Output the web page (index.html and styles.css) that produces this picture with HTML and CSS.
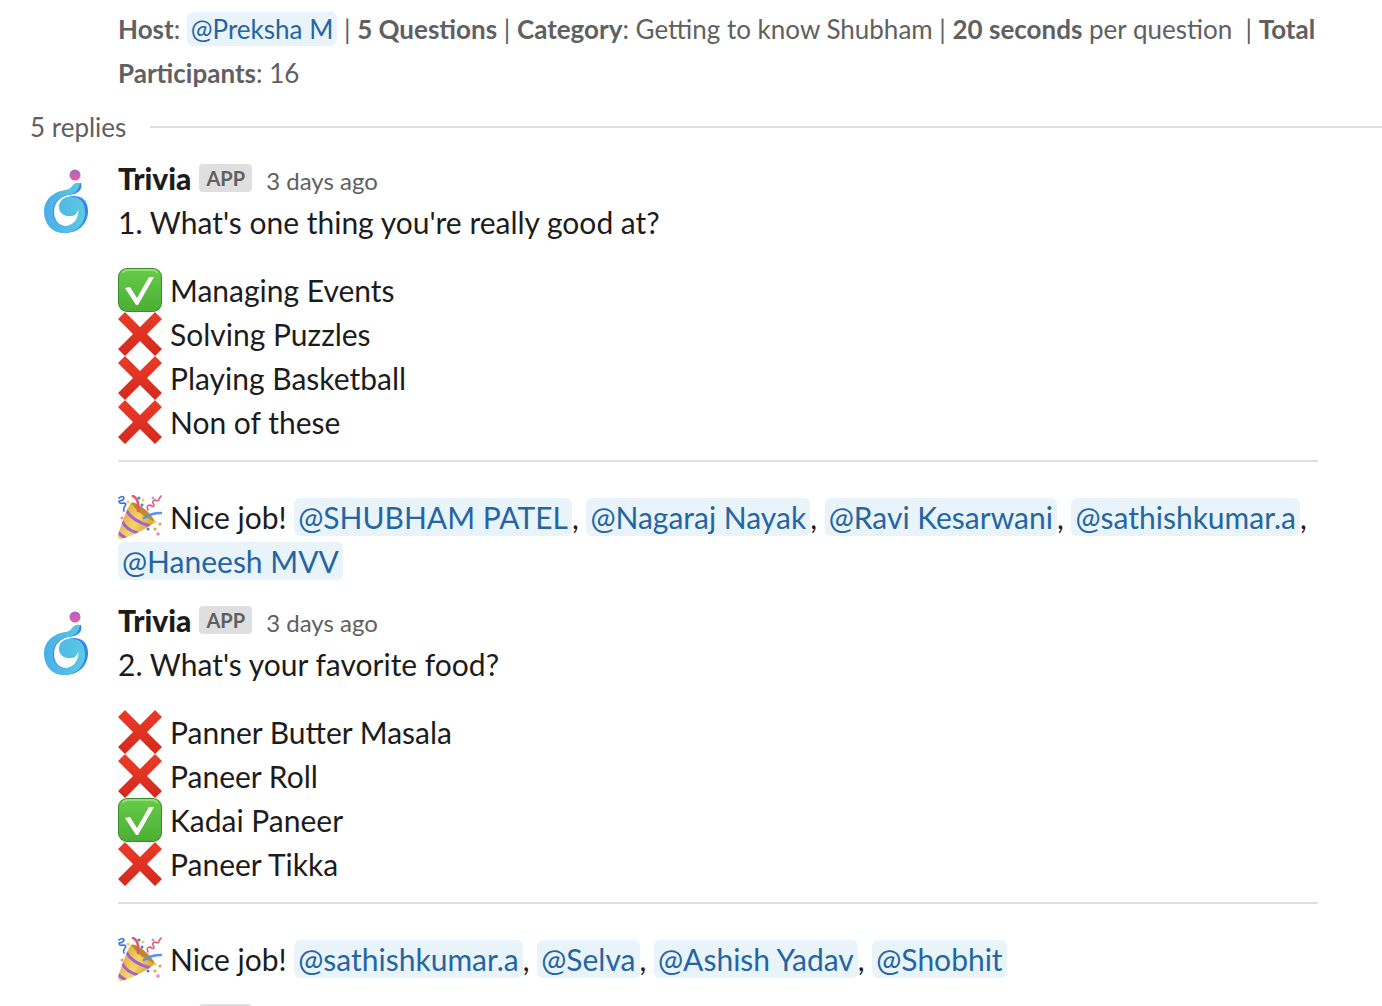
FILE: index.html
```html
<!DOCTYPE html>
<html lang="en">
<head>
    <meta charset="UTF-8">
    <meta name="viewport" content="width=device-width, initial-scale=1.0">
    <title>Trivia - Thread</title>
    <link rel="stylesheet" href="styles.css">
</head>
<body>
    <!-- Shared icons -->
    <svg class="sprite" aria-hidden="true">
        <defs>
            <linearGradient id="logoBlue" x1="0" y1="0" x2="1" y2="0">
                <stop offset="0" stop-color="#4aaeea"/>
                <stop offset="1" stop-color="#5bcbe0"/>
            </linearGradient>
            <linearGradient id="logoDot" x1="0" y1="0" x2="0" y2="1">
                <stop offset="0" stop-color="#a866d0"/>
                <stop offset="1" stop-color="#e85d9c"/>
            </linearGradient>
            <linearGradient id="checkGreen" x1="0" y1="0" x2="0" y2="1">
                <stop offset="0" stop-color="#65cc48"/>
                <stop offset="1" stop-color="#4cae33"/>
            </linearGradient>
            <linearGradient id="crossRed" x1="0" y1="0" x2="0" y2="1">
                <stop offset="0" stop-color="#ec3b27"/>
                <stop offset="1" stop-color="#d22a1e"/>
            </linearGradient>
            <linearGradient id="coneGold" x1="0" y1="0.2" x2="1" y2="0.8">
                <stop offset="0" stop-color="#d9a03a"/>
                <stop offset="0.5" stop-color="#f6d566"/>
                <stop offset="1" stop-color="#c98f2e"/>
            </linearGradient>
            <clipPath id="coneClip">
                <path d="M13 8 L37 27 C30 33 14 41 3 44 Q0 44 0 40 C4 28 8 15 13 8Z"/>
            </clipPath>
        </defs>
        <symbol id="logo" viewBox="0 0 72 72">
            <path fill="#3484f5" d="M51 18 C48 18 45 19 43 21 C41 25 36 25 32 26 C21 29 15 37 15 46 C15 59 23 68 35 68 C48 68 58 59 58 46 C58 36 52 31 44 31 C36 31 30 35 30 42 C30 48 35 51 40 51 C45 51 48 48 48 42 C52 53 44 61 36 61 C28 61 24 54 24 47 C24 37 31 31 39 30 C48 29 53 25 51 18Z"/>
            <path fill="url(#logoBlue)" d="M50 18 C47 17 44 18 42 21 C40 25 35 25 31 26 C20 29 14 37 14 46 C14 59 22 68 34 68 C46 68 55 59 55 48 C55 37 50 32 43 32 C35 31 29 35 29 42 C29 48 34 51 39 51 C44 51 48 48 48 43 C50 53 43 61 35 61 C27 61 23 54 23 47 C23 37 30 31 38 30 C46 29 49 24 50 18Z"/>
            <circle fill="url(#logoDot)" cx="45" cy="10" r="5.5"/>
        </symbol>
        <symbol id="check" viewBox="0 0 44 44">
            <rect width="44" height="44" rx="9" fill="#368d2a"/>
            <rect x="1" y="1" width="42" height="42" rx="8" fill="url(#checkGreen)"/>
            <path d="M5 4 Q7 2 10 2 H34 Q37 2 39 4" fill="none" stroke="#b4ed95" stroke-width="2" stroke-linecap="round" opacity=".6"/>
            <path fill="#fff" d="M7 20 L12 19 L19 30 L31 9 H36 L20 37 L18 37Z"/>
        </symbol>
        <symbol id="cross" viewBox="0 0 44 44">
            <path fill="url(#crossRed)" d="M7 0 L22 15 L37 0 L44 7 L29 22 L44 37 L37 44 L22 29 L7 44 L0 37 L15 22 L0 7Z"/>
        </symbol>
        <symbol id="party" viewBox="0 0 44 44">
            <path fill="url(#coneGold)" d="M13 8 L37 27 C30 33 14 41 3 44 Q0 44 0 40 C4 28 8 15 13 8Z"/>
            <g clip-path="url(#coneClip)" fill="none" stroke="#a262d3" stroke-width="3">
                <path d="M8 15 Q14 26 32 31"/>
                <path d="M4 26 Q8 35 20 38"/>
                <path d="M0 37 Q3 41 8 43"/>
            </g>
            <path fill="#c08a2c" d="M13 8 C17 5 34 18 37 27 C30 25 18 16 13 8Z"/>
            <path d="M14 10 C19 17 28 24 36 27" fill="none" stroke="#e9bd4e" stroke-width="1"/>
            <g fill="none" stroke-width="2.5" stroke-linecap="round">
                <path stroke="#e5546c" d="M15 1 C20 3 21 8 20 16"/>
                <path stroke="#5b92e8" d="M26 23 Q33 18 43 18"/>
            </g>
            <g fill="none" stroke-width="1.6" stroke-linecap="round" stroke-linejoin="round">
                <path stroke="#3971de" d="M1 3 Q5 0 6 3 Q5 6 1 6 Q1 9 5 8 Q9 8 7 11 Q5 13 6 16"/>
                <path stroke="#e05a80" d="M30 15 Q28 10 32 10 Q36 13 36 10 Q33 6 37 5 Q41 7 41 4 L43 1"/>
            </g>
            <g fill="#437ee8"><circle cx="24" cy="10" r="1.5"/><circle cx="30" cy="34" r="1.5"/><circle cx="21" cy="3" r="1.5"/></g>
            <g fill="#f7cf3c"><circle cx="10" cy="7" r="1.5"/><circle cx="25" cy="5" r="1.5"/><circle cx="37" cy="27" r="1.5"/></g>
            <g fill="#ef8ca9"><circle cx="35" cy="3" r="1.5"/><circle cx="40" cy="39" r="1.8"/><circle cx="4" cy="23" r="1.5"/></g>
            <g fill="#ef9a4d"><circle cx="42" cy="29" r="1.6"/><circle cx="37" cy="34" r="1.6"/></g>
        </symbol>
    </svg>

    <main class="thread">
        <p class="context"><b>Host</b>: <a class="mention" href="#">@Preksha M</a> | <b>5 Questions</b> | <b>Category</b>: Getting to know Shubham | <b>20 seconds</b> per question&nbsp; | <b>Total Participants</b>: 16</p>

        <div class="replies"><span>5 replies</span></div>

        <article class="message">
            <svg class="avatar" role="img" aria-label="Trivia"><use href="#logo"/></svg>
            <div class="body">
                <header class="sender"><a class="name" href="#">Trivia</a><span class="badge">APP</span><time class="time">3 days ago</time></header>
                <p>1. What's one thing you're really good at?</p>
                <ul class="answers">
                    <li><svg class="emoji"><use href="#check"/></svg>Managing Events</li>
                    <li><svg class="emoji"><use href="#cross"/></svg>Solving Puzzles</li>
                    <li><svg class="emoji"><use href="#cross"/></svg>Playing Basketball</li>
                    <li><svg class="emoji"><use href="#cross"/></svg>Non of these</li>
                </ul>
                <hr>
                <p class="winners"><svg class="emoji"><use href="#party"/></svg>Nice job! <a class="mention" href="#">@SHUBHAM PATEL</a>, <a class="mention" href="#">@Nagaraj Nayak</a>, <a class="mention" href="#">@Ravi Kesarwani</a>, <a class="mention" href="#">@sathishkumar.a</a>, <a class="mention" href="#">@Haneesh MVV</a></p>
            </div>
        </article>

        <article class="message">
            <svg class="avatar" role="img" aria-label="Trivia"><use href="#logo"/></svg>
            <div class="body">
                <header class="sender"><a class="name" href="#">Trivia</a><span class="badge">APP</span><time class="time">3 days ago</time></header>
                <p>2. What's your favorite food?</p>
                <ul class="answers">
                    <li><svg class="emoji"><use href="#cross"/></svg>Panner Butter Masala</li>
                    <li><svg class="emoji"><use href="#cross"/></svg>Paneer Roll</li>
                    <li><svg class="emoji"><use href="#check"/></svg>Kadai Paneer</li>
                    <li><svg class="emoji"><use href="#cross"/></svg>Paneer Tikka</li>
                </ul>
                <hr>
                <p class="winners"><svg class="emoji"><use href="#party"/></svg>Nice job! <a class="mention" href="#">@sathishkumar.a</a>, <a class="mention" href="#">@Selva</a>, <a class="mention" href="#">@Ashish Yadav</a>, <a class="mention" href="#">@Shobhit</a></p>
            </div>
        </article>

        <article class="message">
            <svg class="avatar" role="img" aria-label="Trivia"><use href="#logo"/></svg>
            <div class="body">
                <header class="sender"><a class="name" href="#">Trivia</a><span class="badge">APP</span><time class="time">3 days ago</time></header>
            </div>
        </article>
    </main>
</body>
</html>
```
FILE: styles.css
```css
* {
    box-sizing: border-box;
}
body {
    margin: 0;
    background: #fff;
    color: #1d1c1d;
    font-family: Lato, sans-serif;
    font-size: 30px;
    line-height: 44px;
}
p, ul {
    margin: 0;
    padding: 0;
}
.sprite {
    position: absolute;
    width: 0;
    height: 0;
}
.thread {
    height: 100vh;
    overflow: hidden;
    padding-top: 7px;
}
.context {
    padding: 0 64px 0 118px;
    font-size: 26px;
    color: #616061;
}
.mention {
    padding: 1px 4px;
    border-radius: 6px;
    background: #e8f4f9;
    color: #2565a3;
    text-decoration: none;
    white-space: nowrap;
}
.replies {
    display: flex;
    align-items: center;
    gap: 24px;
    padding: 10px 0 7px 30px;
    font-size: 26px;
    color: #616061;
}
.replies::after {
    content: "";
    flex: 1;
    height: 2px;
    background: #dfdfdf;
}
.message {
    display: flex;
    align-items: flex-start;
    gap: 16px;
    padding: 0 64px 15px 30px;
}
.avatar {
    flex: none;
    width: 72px;
    height: 72px;
    margin-top: 9px;
}
.body {
    flex: 1;
    min-width: 0;
}
.sender {
    display: flex;
    align-items: baseline;
    height: 44px;
}
.name {
    color: #1d1c1d;
    font-family: "Lato Black", Lato, sans-serif;
    font-weight: 900;
    text-decoration: none;
}
.badge {
    align-self: flex-start;
    margin: 8px 14px 0 8px;
    padding: 0 7px;
    border-radius: 4px;
    background: #dfdfdf;
    color: #616061;
    font-size: 20px;
    font-weight: bold;
    line-height: 28px;
}
.time {
    font-size: 24px;
    line-height: 28px;
    color: #616061;
}
.answers {
    padding-top: 24px;
    list-style: none;
}
.answers li {
    display: flex;
    align-items: center;
}
.emoji {
    width: 44px;
    height: 44px;
    margin-right: 8px;
    vertical-align: top;
}
hr {
    height: 2px;
    margin: 16px 0 33px;
    border: 0;
    background: #dfdfdf;
}
```
